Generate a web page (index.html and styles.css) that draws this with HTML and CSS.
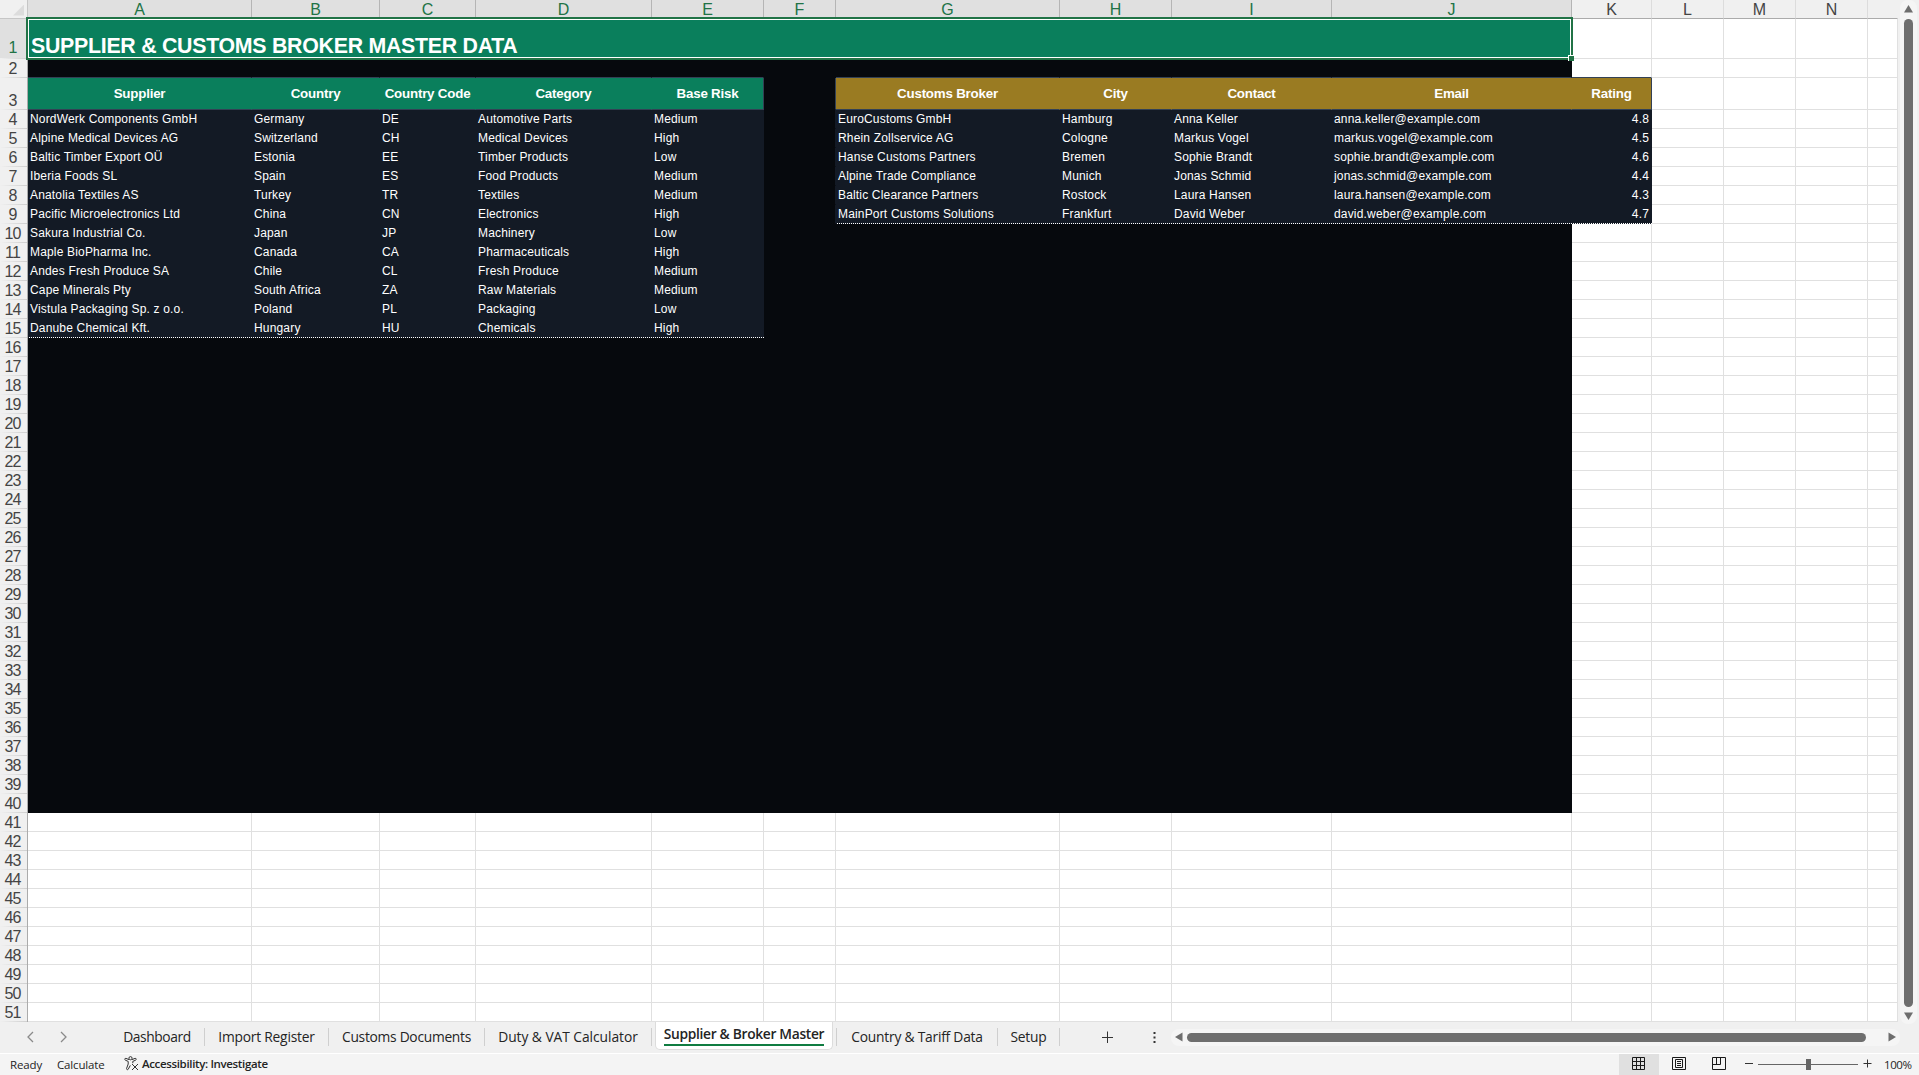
FILE: index.html
```
<!DOCTYPE html>
<html lang="en">
<head>
    <meta charset="UTF-8">
    <meta name="viewport" content="width=device-width, initial-scale=1.0">
    <title>Supplier &amp; Broker Master</title>
    <link rel="stylesheet" href="styles.css">
</head>
<body>
    <div class="workspace">
        <div class="sheet-area">
            <table class="sheet">
                <colgroup id="cols"></colgroup>
                <thead><tr id="col-heads"></tr></thead>
                <tbody id="rows"></tbody>
            </table>
            <div class="selection"><span class="fill-handle"></span></div>
        </div>
        <div class="v-scroll">
            <svg width="9" height="8" viewBox="0 0 9 8"><path d="M4.5 0L9 7.5H0Z"/></svg>
            <div class="v-thumb"></div>
            <svg width="9" height="8" viewBox="0 0 9 8"><path d="M4.5 8L9 0.5H0Z"/></svg>
        </div>
    </div>

    <div class="tab-bar">
        <div class="tab-nav">
            <svg width="7" height="12" viewBox="0 0 7 12"><path d="M6 1L1 6L6 11"/></svg>
            <svg width="7" height="12" viewBox="0 0 7 12"><path d="M1 1L6 6L1 11"/></svg>
        </div>
        <div class="tab t1"><span>Dashboard</span></div>
        <div class="tab t2"><span>Import Register</span></div>
        <div class="tab t3"><span>Customs Documents</span></div>
        <div class="tab t4"><span>Duty &amp; VAT Calculator</span></div>
        <div class="tab active"><span>Supplier &amp; Broker Master</span></div>
        <div class="tab t6"><span>Country &amp; Tariff Data</span></div>
        <div class="tab t7"><span>Setup</span></div>
        <svg class="add" width="12" height="12" viewBox="0 0 12 12"><path d="M6.5 0.5V12M1 6.5H12"/></svg>
        <svg class="dots" width="3" height="12" viewBox="0 0 3 12"><path d="M0.5 1h2v2h-2zM0.5 5.5h2v2h-2zM0.5 10h2v2h-2z"/></svg>
        <div class="h-scroll">
            <svg width="8" height="10" viewBox="0 0 8 10"><path d="M0 5L7.5 0.5V9.5Z"/></svg>
            <div class="h-thumb"></div>
            <svg width="8" height="10" viewBox="0 0 8 10"><path d="M8 5L0.5 0.5V9.5Z"/></svg>
        </div>
    </div>

    <div class="status-bar">
        <span class="ready">Ready</span>
        <span class="calc">Calculate</span>
        <svg class="access" width="15" height="15" viewBox="0 0 15 15">
            <circle cx="6.5" cy="2.2" r="1.6"/>
            <path d="M5 3.6L2 2.4C0.6 2 0.3 3.7 1.4 4.2L4.2 5.4V8L2.6 12.4C2.3 13.8 3.8 14.2 4.3 13.1L6.3 9.4M8 3.6L11 2.4C12.4 2 12.7 3.7 11.6 4.2L8.8 5.4V7.2M8 8L14 14M14 8L8 14"/>
        </svg>
        <b class="access-text">Accessibility: Investigate</b>
        <div class="view on">
            <svg width="14" height="13" viewBox="0 0 14 13"><path d="M0.5 0.5h12v12h-12zM0.5 4.5h12M0.5 8.5h12M4.5 0.5v12M8.5 0.5v12"/></svg>
        </div>
        <div class="view">
            <svg width="14" height="13" viewBox="0 0 14 13"><path d="M0.5 0.5h13v12h-13zM3.5 2.5h7v8h-7zM5 4.5h4M5 6.5h4M5 8.5h4"/></svg>
        </div>
        <div class="view">
            <svg width="14" height="13" viewBox="0 0 14 13"><path d="M0.5 0.5h13v12h-13zM4.5 0.5v7M8.5 0.5v7M0.5 7.5h8"/></svg>
        </div>
        <div class="zoom">
            <i class="minus"></i>
            <div class="slider"><i></i></div>
            <svg width="9" height="9" viewBox="0 0 9 9"><path d="M4.5 0.5V8.5M0.5 4.5H8.5"/></svg>
        </div>
        <span class="percent">100%</span>
    </div>

    <script>
        const widths = [224, 128, 96, 176, 112, 72, 224, 112, 160, 240, 80, 72, 72, 72, 30];
        const letters = "ABCDEFGHIJKLMN".split("").concat("");

        const suppliers = [
            ["NordWerk Components GmbH", "Germany", "DE", "Automotive Parts", "Medium"],
            ["Alpine Medical Devices AG", "Switzerland", "CH", "Medical Devices", "High"],
            ["Baltic Timber Export OÜ", "Estonia", "EE", "Timber Products", "Low"],
            ["Iberia Foods SL", "Spain", "ES", "Food Products", "Medium"],
            ["Anatolia Textiles AS", "Turkey", "TR", "Textiles", "Medium"],
            ["Pacific Microelectronics Ltd", "China", "CN", "Electronics", "High"],
            ["Sakura Industrial Co.", "Japan", "JP", "Machinery", "Low"],
            ["Maple BioPharma Inc.", "Canada", "CA", "Pharmaceuticals", "High"],
            ["Andes Fresh Produce SA", "Chile", "CL", "Fresh Produce", "Medium"],
            ["Cape Minerals Pty", "South Africa", "ZA", "Raw Materials", "Medium"],
            ["Vistula Packaging Sp. z o.o.", "Poland", "PL", "Packaging", "Low"],
            ["Danube Chemical Kft.", "Hungary", "HU", "Chemicals", "High"]
        ];

        const brokers = [
            ["EuroCustoms GmbH", "Hamburg", "Anna Keller", "anna.keller@example.com", "4.8"],
            ["Rhein Zollservice AG", "Cologne", "Markus Vogel", "markus.vogel@example.com", "4.5"],
            ["Hanse Customs Partners", "Bremen", "Sophie Brandt", "sophie.brandt@example.com", "4.6"],
            ["Alpine Trade Compliance", "Munich", "Jonas Schmid", "jonas.schmid@example.com", "4.4"],
            ["Baltic Clearance Partners", "Rostock", "Laura Hansen", "laura.hansen@example.com", "4.3"],
            ["MainPort Customs Solutions", "Frankfurt", "David Weber", "david.weber@example.com", "4.7"]
        ];

        const supplierHeads = ["Supplier", "Country", "Country Code", "Category", "Base Risk"];
        const brokerHeads = ["Customs Broker", "City", "Contact", "Email", "Rating"];

        // Column widths and letters
        document.getElementById("cols").innerHTML =
            '<col style="width:28px">' + widths.map(w => `<col style="width:${w}px">`).join("");
        document.getElementById("col-heads").innerHTML = '<th class="corner"><i></i></th>' +
            letters.map((l, i) => `<th class="${i < 10 ? "picked" : ""}">${l}</th>`).join("");

        // Text and class for one cell
        function cell(r, c) {
            const left = c < 5;
            const right = c > 5 && c < 11;
            if (r === 3 && left) return [supplierHeads[c], "head green" + (c === 4 ? " last" : "")];
            if (r === 3 && right) return [brokerHeads[c - 6], "head gold" + (c === 10 ? " last" : "")];
            if (r > 3 && r < 16 && left) return [suppliers[r - 4][c], "data" + (r === 15 ? " end" : "")];
            if (r > 3 && r < 10 && right) return [brokers[r - 4][c - 6], "data" + (r === 9 ? " end" : "") + (c === 10 ? " num" : "")];
            if (c === 5 && r === 3) return ["", "dark last"];
            if (c === 5 && r > 3 && r < 10) return ["", "dark edge"];
            if (r < 41 && c < 10) return ["", "dark" + (r === 2 && c !== 5 ? " above" : "")];
            return ["", r === 2 && c === 10 ? "above" : ""];
        }

        let html = "";
        for (let r = 1; r <= 51; r++) {
            html += `<tr class="r${r}"><th>${r}</th>`;
            if (r === 1) {
                html += '<td class="title" colspan="10">SUPPLIER &amp; CUSTOMS BROKER MASTER DATA</td>';
            }
            for (let c = r === 1 ? 10 : 0; c < widths.length; c++) {
                const [text, cls] = cell(r, c);
                html += `<td class="${cls}">${text}</td>`;
            }
            html += "</tr>";
        }
        document.getElementById("rows").innerHTML = html;
    </script>
</body>
</html>
```
FILE: styles.css
```
* {
    box-sizing: border-box;
}

body {
    margin: 0;
    height: 1075px;
    display: flex;
    flex-direction: column;
    overflow: hidden;
    background: #f0f0f0;
    font-family: "Open Sans", "Noto Sans", sans-serif;
    color: #242424;
}

.workspace {
    display: flex;
    height: 1022px;
}

.sheet-area {
    position: relative;
    width: 1898px;
}

.sheet {
    width: 1898px;
    table-layout: fixed;
    border-collapse: separate;
    border-spacing: 0;
    background: #fff;
    font-family: "Liberation Sans", Arial, sans-serif;
}

.sheet th,
.sheet td {
    padding: 0;
    overflow: hidden;
    white-space: nowrap;
}

/* Column letters */
.sheet thead th {
    height: 19px;
    padding-top: 2px;
    background: #f0f0f0;
    border-right: 1px solid #dcdcdc;
    border-bottom: 1px solid #ababab;
    color: #444;
    font-size: 16px;
    font-weight: normal;
    line-height: 16px;
}

.sheet thead th:last-child {
    border-right-color: #f0f0f0;
}

.sheet thead .picked {
    background: #e0e0e0;
    border-right-color: #b5b5b5;
    color: #217346;
}

.sheet thead .corner {
    border-color: #c6c6c6;
}

.corner i {
    display: block;
    width: 11px;
    height: 11px;
    margin: 0 0 0 13px;
    background: #dcdcdc;
    clip-path: polygon(100% 0, 100% 100%, 0 100%);
}

/* Row numbers */
.sheet tbody th {
    height: 19px;
    padding: 1px 2px 1px 0;
    background: linear-gradient(90deg, #f0f0f0, #cfcfcf) bottom / 100% 1px no-repeat #f0f0f0;
    border-right: 1px solid #ababab;
    color: #444;
    font-size: 16px;
    font-weight: normal;
    letter-spacing: -0.9px;
    line-height: 17px;
    vertical-align: bottom;
}

.sheet .r1 th {
    height: 40px;
    padding-bottom: 3px;
    background-color: #e0e0e0;
    color: #217346;
}

.sheet .r3 th {
    height: 32px;
}

.sheet td {
    border-right: 1px solid #e0e0e0;
    border-bottom: 1px solid #e0e0e0;
    font-size: 12px;
    letter-spacing: 0.17px;
    line-height: 18px;
}

.sheet .title {
    padding-left: 3px;
    background: #0a7f5c;
    border-color: #0a7f5c;
    color: #fff;
    font-size: 21.33px;
    font-weight: bold;
    letter-spacing: -0.27px;
    line-height: 24px;
    vertical-align: bottom;
}

.sheet .dark {
    background: #06090d;
    border-color: #06090d;
}

.sheet .above {
    border-bottom-color: #334155;
}

.sheet .head {
    border-bottom-color: #334155;
    color: #fff;
    font-size: 13.33px;
    font-weight: bold;
    letter-spacing: -0.2px;
    text-align: center;
}

.sheet .green {
    background: #0a7f5c;
    border-right-color: #0a7f5c;
}

.sheet .gold {
    background: #9a7b22;
    border-right-color: #9a7b22;
}

.sheet .last {
    border-right-color: #334155;
}

.sheet .edge {
    border-right-color: #131a25;
}

.sheet .data {
    padding-left: 2px;
    background: #131a25;
    border-color: #131a25;
    color: #fff;
}

.sheet .num {
    padding-right: 2px;
    text-align: right;
}

/* Dotted line under the last record */
.sheet .end {
    background: repeating-linear-gradient(90deg, #131a25 0 1px, #fff 1px 2px) bottom / 100% 1px no-repeat border-box #131a25;
    border-color: transparent;
}

/* Selected range outline */
.selection {
    position: absolute;
    left: 26px;
    top: 17px;
    width: 1547px;
    height: 43px;
    border: 2px solid #217346;
    box-shadow: inset 0 0 0 1px #fff;
}

.fill-handle {
    position: absolute;
    right: -3px;
    bottom: -3px;
    width: 6px;
    height: 6px;
    background: #217346;
    border: solid #fff;
    border-width: 1px 0 0 1px;
}

.v-scroll {
    display: flex;
    flex-direction: column;
    align-items: center;
    justify-content: space-between;
    width: 17px;
    height: 1024px;
    margin-left: 2px;
    padding: 5px 0 4px;
    background: #f5f5f5;
    border-radius: 8px;
}

.v-scroll path,
.h-scroll path {
    fill: #6e6e6e;
}

.v-thumb {
    width: 9px;
    height: 988px;
    background: #6e6e6e;
    border-radius: 5px;
}

/* Sheet tabs */
.tab-bar {
    display: flex;
    align-items: center;
    height: 32px;
    padding-bottom: 1px;
    border-bottom: 1px solid #fff;
    font-size: 13.8px;
    letter-spacing: -0.22px;
}

.tab-nav {
    display: flex;
    gap: 26px;
    width: 110px;
    padding-left: 27px;
}

.tab-nav path {
    fill: none;
    stroke: #8a8a8a;
    stroke-width: 1.3;
}

.tab {
    display: flex;
    justify-content: center;
    height: 18px;
    line-height: 18px;
    border-right: 1px solid #cfcfcf;
    white-space: nowrap;
}

.t1 {
    width: 95px;
    letter-spacing: -0.4px;
}

.t2 {
    width: 124px;
}

.t3 {
    width: 156px;
    letter-spacing: -0.28px;
}

.t4 {
    width: 167px;
    letter-spacing: -0.05px;
}

.t6 {
    width: 162px;
    border-left: 1px solid #cfcfcf;
}

.t7 {
    width: 62px;
}

.tab.active {
    align-self: flex-start;
    width: 178px;
    height: 28px;
    margin: 0 3px;
    padding-top: 3px;
    background: #fff;
    border: 1px solid #dcdcdc;
    border-top: 0;
    border-radius: 0 0 5px 5px;
    font-weight: 600;
    letter-spacing: -0.32px;
}

.active span {
    height: 21px;
    border-bottom: 2px solid #107c41;
}

.add {
    margin-left: 41px;
    stroke: #333;
}

.dots {
    margin-left: 40px;
    fill: #333;
}

.h-scroll {
    display: flex;
    align-items: center;
    justify-content: space-between;
    width: 729px;
    height: 17px;
    margin-left: 15px;
    padding: 0 4px;
    background: #f5f5f5;
    border-radius: 8px;
}

.h-thumb {
    width: 679px;
    height: 9px;
    margin: 0 auto 0 4px;
    background: #6e6e6e;
    border-radius: 5px;
}

/* Status bar */
.status-bar {
    display: flex;
    align-items: center;
    height: 21px;
    background: #f4f4f4;
    font-size: 11.5px;
    letter-spacing: -0.15px;
}

.ready {
    width: 47px;
    padding-left: 10px;
}

.calc {
    width: 77px;
    padding-left: 10px;
}

.access {
    margin-bottom: 2px;
    fill: none;
    stroke: #333;
}

.access-text {
    flex: 1;
    padding: 0 0 2px 3px;
    font-weight: 600;
    letter-spacing: -0.35px;
}

.view {
    display: flex;
    justify-content: center;
    width: 40px;
    height: 21px;
    padding-top: 3px;
}

.view.on {
    background: #e0e0e0;
}

.view path {
    fill: none;
    stroke: #1a1a1a;
}

.zoom {
    display: flex;
    align-items: center;
    gap: 5px;
    margin-left: 6px;
}

.minus {
    width: 8px;
    height: 1px;
    margin-bottom: 2px;
    background: #333;
}

.slider {
    display: flex;
    align-items: center;
    justify-content: center;
    width: 100px;
    height: 15px;
    background: linear-gradient(#666, #666) center / 100% 1px no-repeat;
}

.slider i {
    width: 5px;
    height: 11px;
    background: #666;
}

.zoom svg {
    margin-bottom: 2px;
}

.zoom path {
    stroke: #333;
}

.percent {
    width: 47px;
    padding: 0 0 1px 12px;
    letter-spacing: -0.4px;
}
```
